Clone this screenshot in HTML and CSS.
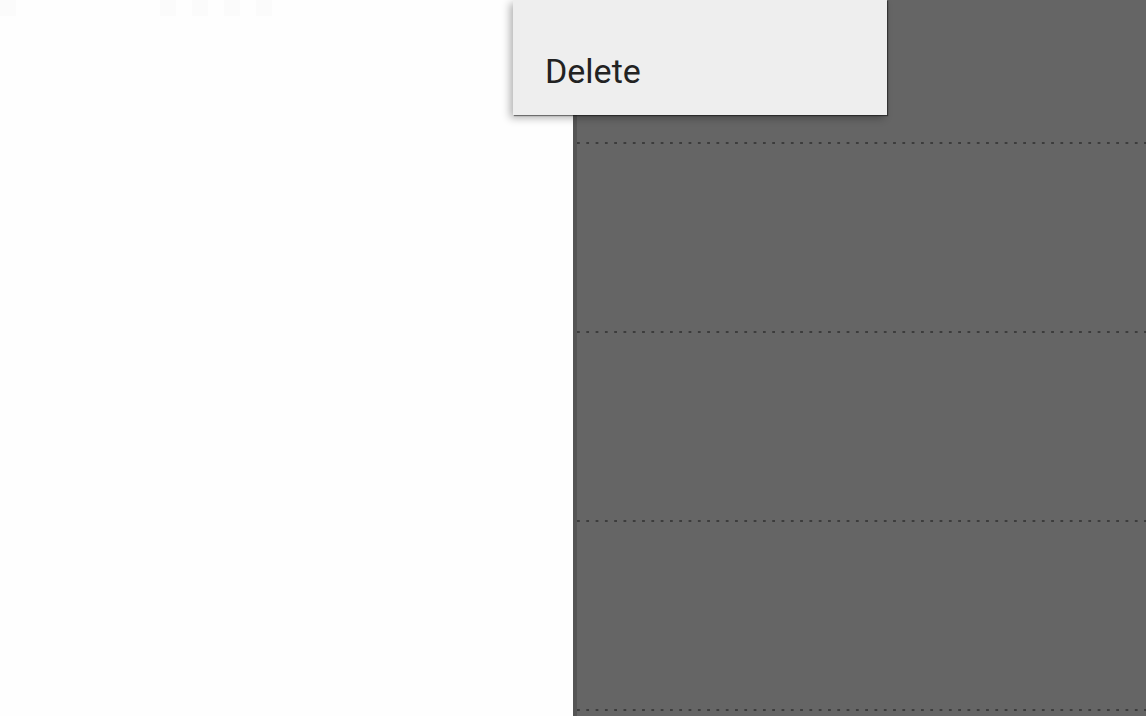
FILE: index.html
```html
<!DOCTYPE html>
<html lang="en">
<head>
  <meta charset="UTF-8" />
  <meta name="viewport" content="width=device-width, initial-scale=1.0" />
  <title>List</title>
  <link rel="stylesheet" href="styles.css">
</head>
<body>

<div class="screen">
  <div class="sidebar">
    <div class="ghost-row">
      <span class="ghost"></span>
      <span class="ghost far"></span>
      <span class="ghost"></span>
      <span class="ghost"></span>
      <span class="ghost"></span>
    </div>
  </div>

  <div class="panel">
    <div class="divider"></div>
    <div class="cell"></div>
    <div class="divider"></div>
    <div class="cell"></div>
    <div class="divider"></div>
    <div class="cell"></div>
    <div class="divider"></div>
  </div>

  <div class="menu">
    <div class="menu-item">Delete</div>
  </div>
</div>

</body>
</html>
```

FILE: styles.css
```css
html, body {
  margin: 0;
  height: 100%;
  overflow: hidden;
}
body {
  font-family: 'Roboto', 'Liberation Sans', sans-serif;
  background: #fefefe;
  color: #222;
}
.screen {
  position: relative;
  display: flex;
  height: 716px;
}
.sidebar {
  width: 573px;
  flex-shrink: 0;
  background: #fefefe;
}
.ghost-row {
  display: flex;
  gap: 16px;
}
.ghost {
  width: 16px;
  height: 16px;
  background: #fbfbfb;
}
.ghost.far {
  margin-left: 128px;
}
.panel {
  flex: 1;
  background: #656565;
  border-left: 4px solid #555;
  padding-top: 142px;
  overflow: hidden;
}
.divider {
  height: 2px;
  background-image: linear-gradient(to right, #3c3c3c 0 3px, transparent 3px);
  background-size: 9.3px 2px;
}
.cell {
  height: 187px;
}
.menu {
  position: absolute;
  left: 513px;
  top: 0;
  width: 374px;
  height: 115px;
  background: #eeeeee;
  box-shadow: -3px 3px 8px rgba(0,0,0,0.3), 1px 1px 1px rgba(0,0,0,0.45);
  display: flex;
  flex-direction: column;
  justify-content: flex-end;
}
.menu-item {
  font-size: 34px;
  line-height: 40px;
  padding: 0 0 24px 32px;
  color: #222;
}
```
